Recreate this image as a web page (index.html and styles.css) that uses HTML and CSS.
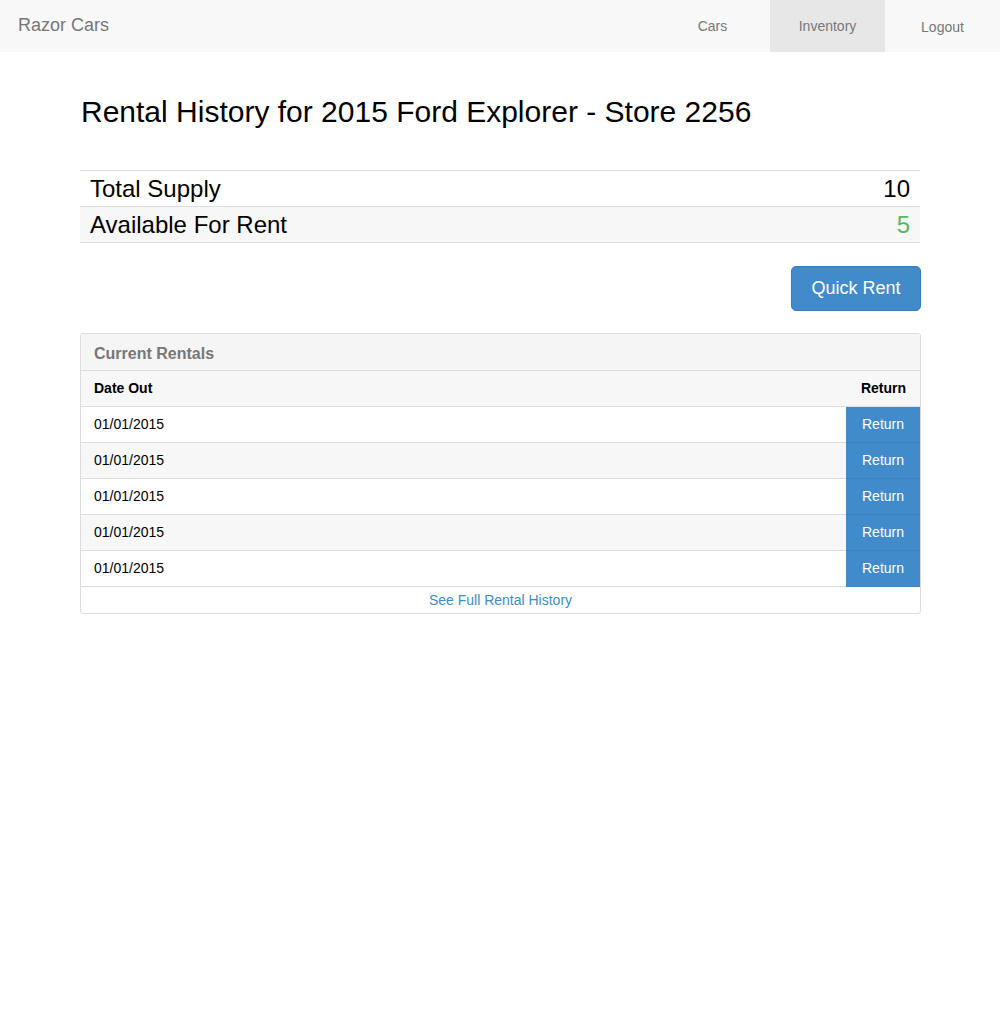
FILE: index.html
```html
<!DOCTYPE html>
<html>
<head>
<meta charset="utf-8">
<title>Razor Cars</title>
<link rel="stylesheet" href="styles.css">
</head>
<body>
<nav class="navbar">
  <a class="brand" href="#">Razor Cars</a>
  <ul class="nav">
    <li><a href="#">Cars</a></li>
    <li class="active"><a href="#">Inventory</a></li>
    <li><a href="#" class="logout">Logout</a></li>
  </ul>
</nav>
<main class="container">
  <h2 class="title">Rental History for 2015 Ford Explorer - Store 2256</h2>
  <div class="summary">
    <div class="summary-row"><span>Total Supply</span><span>10</span></div>
    <div class="summary-row striped"><span>Available For Rent</span><span class="green">5</span></div>
  </div>
  <div class="actions">
    <button class="btn-lg">Quick Rent</button>
  </div>
  <section class="panel">
    <div class="panel-heading">Current Rentals</div>
    <div class="row head"><span class="cell">Date Out</span><span class="cell right">Return</span></div>
    <div class="row"><span class="cell">01/01/2015</span><button class="return">Return</button></div>
    <div class="row striped"><span class="cell">01/01/2015</span><button class="return">Return</button></div>
    <div class="row"><span class="cell">01/01/2015</span><button class="return">Return</button></div>
    <div class="row striped"><span class="cell">01/01/2015</span><button class="return">Return</button></div>
    <div class="row"><span class="cell">01/01/2015</span><button class="return">Return</button></div>
    <div class="panel-footer"><a href="#">See Full Rental History</a></div>
  </section>
</main>
</body>
</html>
```
FILE: styles.css
```css
* { box-sizing: border-box; }
body {
  margin: 0;
  font-family: "Liberation Sans", Arial, sans-serif;
  font-size: 14px;
  color: #000;
  background: #fff;
}
a { text-decoration: none; }
.navbar {
  height: 52px;
  background: #f8f8f8;
  display: flex;
  justify-content: space-between;
  align-items: stretch;
}
.brand {
  color: #777;
  font-size: 18px;
  padding-left: 18px;
  line-height: 50px;
}
.nav {
  list-style: none;
  margin: 0;
  padding: 0;
  display: flex;
}
.nav li { width: 115px; }
.nav li a {
  display: block;
  height: 52px;
  line-height: 52px;
  text-align: center;
  color: #777;
  font-size: 14px;
}
.nav li.active { background: #e7e7e7; }
.nav li a.logout { line-height: 55px; }
.container {
  width: 840px;
  margin: 0 auto;
}
.title {
  font-size: 30px;
  font-weight: normal;
  line-height: 33px;
  margin: 43px 0 0 1px;
}
.summary {
  margin-top: 42px;
  border-top: 1px solid #ddd;
}
.summary-row {
  display: flex;
  justify-content: space-between;
  height: 36px;
  align-items: center;
  padding: 0 10px;
  font-size: 24px;
  border-bottom: 1px solid #ddd;
}
.summary-row.striped { background: #f7f7f7; }
.green { color: #5cb85c; }
.actions {
  display: flex;
  justify-content: flex-end;
  margin-top: 23px;
}
.btn-lg {
  font-family: inherit;
  font-size: 18px;
  color: #fff;
  background: #428bca;
  border: 1px solid #357ebd;
  border-radius: 5px;
  width: 130px;
  height: 45px;
  margin-right: -1px;
  padding: 0;
}
.panel {
  margin-top: 22px;
  margin-right: -1px;
  border: 1px solid #ddd;
  border-radius: 3px;
  overflow: hidden;
}
.panel-heading {
  background: #f5f5f5;
  height: 37px;
  padding: 10px 0 0 13px;
  line-height: 20px;
  font-size: 16px;
  font-weight: bold;
  color: #777;
  border-bottom: 1px solid #ddd;
}
.row {
  display: flex;
  justify-content: space-between;
  align-items: stretch;
  height: 36px;
  border-bottom: 1px solid #ddd;
}
.row.head { background: #f7f7f7; font-weight: bold; }
.row.striped { background: #f7f7f7; }
.cell {
  display: flex;
  align-items: center;
  padding: 0 13px 1px;
}
.cell.right { padding-right: 14px; }
.return {
  font-family: inherit;
  font-size: 14px;
  color: #fff;
  background: #428bca;
  border: 0;
  width: 74px;
  padding: 0 0 2px;
  margin-bottom: -1px;
  border-bottom: 1px solid #3d83c0;
}
.panel-footer {
  height: 26px;
  display: flex;
  align-items: center;
  justify-content: center;
  padding-bottom: 1px;
}
.panel-footer a { color: #428bca; font-size: 14px; }
```
